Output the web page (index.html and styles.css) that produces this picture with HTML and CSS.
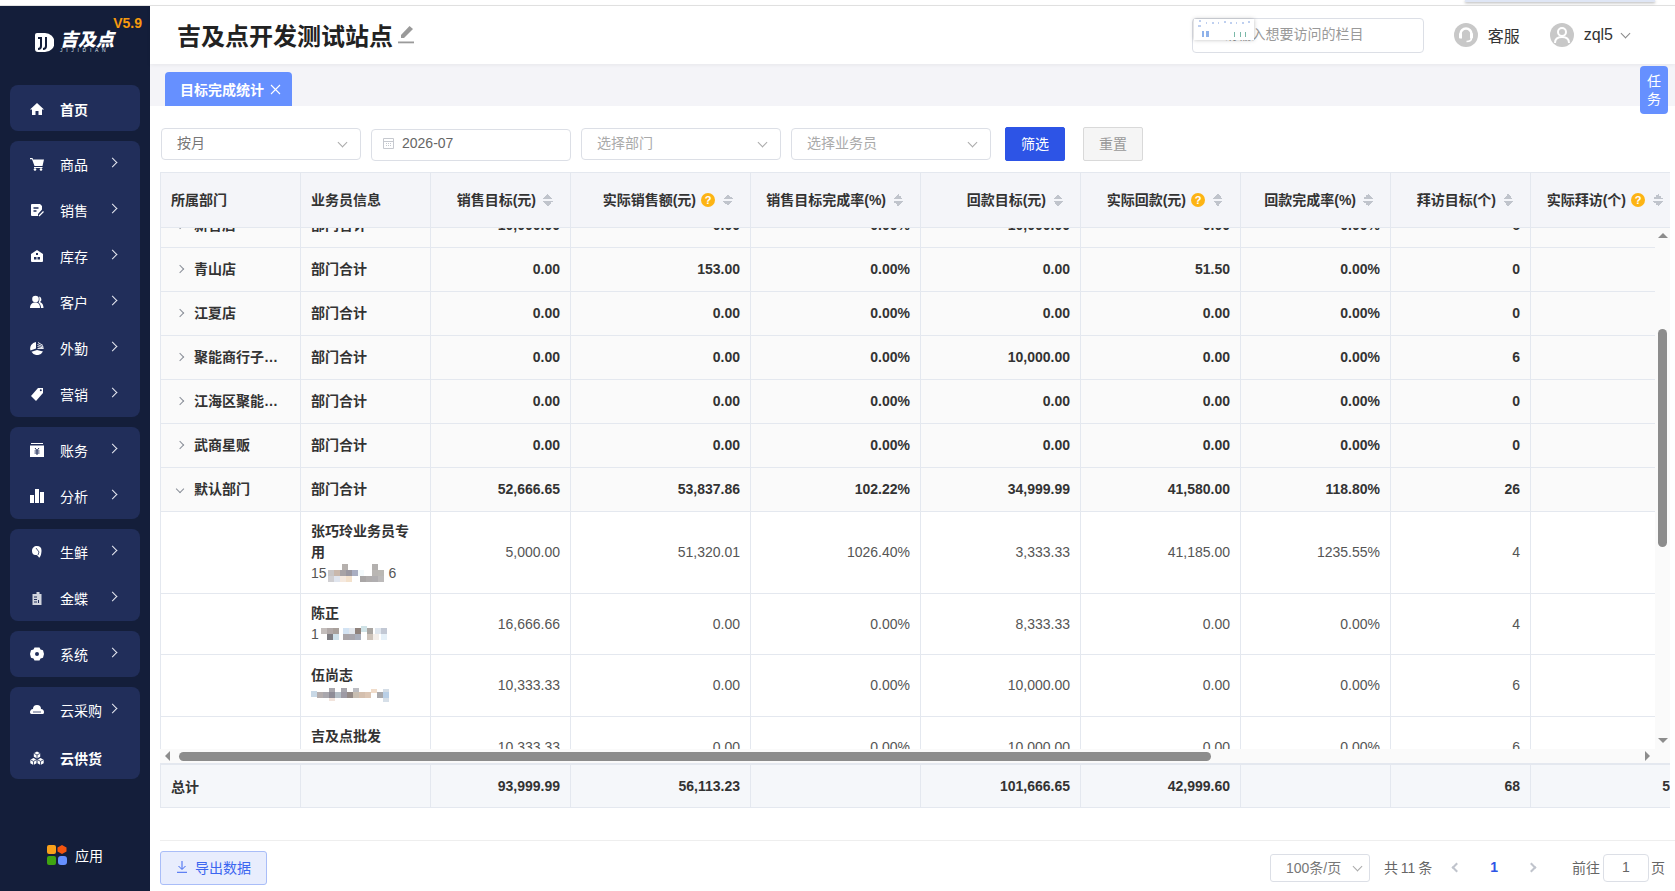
FILE: index.html
```html
<!DOCTYPE html>
<html lang="zh-CN">

<head>
    <meta charset="UTF-8" />
    <title>目标完成统计</title>
    <link rel="stylesheet" href="styles.css">
</head>

<body>
    <div class="topline">
        <div class="topline-frag"></div>
    </div>
    <div class="app">
        <aside class="sidebar">
            <div class="logo">
                <svg class="logo-mark" width="20" height="21" viewBox="0 0 20 21">
                    <path d="M3 1h8a9 9 0 0 1 0 19H4a3 3 0 0 1-3-3V3a2 2 0 0 1 2-2z" fill="#fff" />
                    <path d="M7 5v9a3 3 0 0 1-3 3M12 5v9a3 3 0 0 1-3 3" fill="none" stroke="#141e3a" stroke-width="2" />
                    <rect x="4" y="5" width="3" height="2" fill="#141e3a" />
                </svg>
                <div class="logo-text">
                    <div class="logo-cn">吉及点</div>
                    <div class="logo-en">JIJIDIAN</div>
                </div>
                <span class="version">V5.9</span>
            </div>

            <div class="nav-group">
                <a class="nav-item bold">
                    <svg class="nav-icon" viewBox="0 0 14 14"><path d="M7 1l7 6.500h-2V13H8.500V9h-3v4H2V7.500H0z" /></svg>
                    <span>首页</span>
                </a>
            </div>
            <div class="nav-group">
                <a class="nav-item">
                    <svg class="nav-icon" viewBox="0 0 14 14"><path d="M0 1h2.500l.6 1.500H14l-1.500 6.500H4.500L2 2.300H0z" /><path d="M4 10h8.500v1H4z" /><circle cx="5" cy="12.500" r="1.300" /><circle cx="11" cy="12.500" r="1.300" /></svg>
                    <span>商品</span>
                    <i class="nav-arrow"></i>
                </a>
                <a class="nav-item">
                    <svg class="nav-icon" viewBox="0 0 14 14"><path d="M2 1h8l2 2v3.500L8 11v2H2a1 1 0 0 1-1-1V2a1 1 0 0 1 1-1z" /><path d="M3.500 5h5M3.500 8h3" stroke="#212e5a" stroke-width="1.300" /><path d="M9 13l4.500-4.500" stroke="#fff" stroke-width="1.300" /></svg>
                    <span>销售</span>
                    <i class="nav-arrow"></i>
                </a>
                <a class="nav-item">
                    <svg class="nav-icon" viewBox="0 0 14 14"><path d="M2 13a1 1 0 0 1-1-1V5l6-4 6 4v7a1 1 0 0 1-1 1z" /><path d="M6 4h2v2H6zM4 8h2.500v2.500H4zM7.500 8H10v2.500H7.500z" fill="#212e5a" /></svg>
                    <span>库存</span>
                    <i class="nav-arrow"></i>
                </a>
                <a class="nav-item">
                    <svg class="nav-icon" viewBox="0 0 14 14"><circle cx="5.500" cy="4" r="3.300" /><path d="M0 13c0-3.500 2-5.500 5.500-5.500S10 10 10 13z" /><path d="M9 1.500a3 3 0 0 1 1 5.500c2.500 1 3.500 3 3.500 6h-2.500c0-2.500-1-4.500-2.500-5.500 1-1.500 1.300-4 .5-6z" /></svg>
                    <span>客户</span>
                    <i class="nav-arrow"></i>
                </a>
                <a class="nav-item">
                    <svg class="nav-icon" viewBox="0 0 14 14"><path d="M6 1v6.500l-5.500 2A6.500 6.500 0 0 1 6 1z" /><path d="M1.500 10.700L7 9l6 1.500A6.500 6.500 0 0 1 1.500 10.700z" /><path d="M8 1.500l5 3M7.500 3.500l6 2.500M7.500 5.500l6 1.500M7.500 7.500h6" stroke="#fff" stroke-width=".9" /></svg>
                    <span>外勤</span>
                    <i class="nav-arrow"></i>
                </a>
                <a class="nav-item">
                    <svg class="nav-icon" viewBox="0 0 14 14"><path d="M8 1h5v5l-7 8-5-5z" /><circle cx="10.800" cy="3.200" r="1" fill="#212e5a" /></svg>
                    <span>营销</span>
                    <i class="nav-arrow"></i>
                </a>
            </div>
            <div class="nav-group">
                <a class="nav-item">
                    <svg class="nav-icon" viewBox="0 0 14 14"><path d="M1 0h12v1H1zM0 2.500h14V14H0z" /><path d="M5 5l2 2.500L9 5M4.500 8h5M4.500 10h5M7 7.500V12" fill="none" stroke="#212e5a" stroke-width="1" /></svg>
                    <span>账务</span>
                    <i class="nav-arrow"></i>
                </a>
                <a class="nav-item">
                    <svg class="nav-icon" viewBox="0 0 14 14"><path d="M0 6h4v8H0zM5 0h4v14H5zM10 3h4v11h-4z" /></svg>
                    <span>分析</span>
                    <i class="nav-arrow"></i>
                </a>
            </div>
            <div class="nav-group">
                <a class="nav-item">
                    <svg class="nav-icon" viewBox="0 0 14 14"><path d="M2 6c0-3 2-5 5-5s4.500 1.500 4.500 4.500S10.500 12 9.500 12.500 8 9.500 6 10 2 9 2 6z" /><path d="M6 3l3 4-1 3" fill="none" stroke="#212e5a" stroke-width=".8" /></svg>
                    <span>生鲜</span>
                    <i class="nav-arrow"></i>
                </a>
                <a class="nav-item">
                    <svg class="nav-icon dim" viewBox="0 0 14 14"><path d="M2.500 3h4V1h3v2h2v11h-9z" /><path d="M4 6h3M4 8.500h3M4 11h3M8.500 9v3" stroke="#212e5a" stroke-width="1" /></svg>
                    <span>金蝶</span>
                    <i class="nav-arrow"></i>
                </a>
            </div>
            <div class="nav-group">
                <a class="nav-item">
                    <svg class="nav-icon" viewBox="0 0 14 14"><path fill-rule="evenodd" d="M4.500 .5h5l1 2 2.500.7L14 7l-1 3.800-2.500.7-1 2h-5l-1-2L1 10.800 0 7l1-3.800 2.500-.7zM7 5a2 2 0 1 0 0 4 2 2 0 0 0 0-4z" /></svg>
                    <span>系统</span>
                    <i class="nav-arrow"></i>
                </a>
            </div>
            <div class="nav-group">
                <a class="nav-item">
                    <svg class="nav-icon" viewBox="0 0 14 14"><path d="M3 6a4 4 0 0 1 8 0c2 0 3 1.500 3 3s-.5 2-1.500 2h-11C.5 11 0 10 0 9s1-3 3-3z" /><path d="M3 9h8" stroke="#212e5a" stroke-width=".8" /></svg>
                    <span>云采购</span>
                    <i class="nav-arrow"></i>
                </a>
                <a class="nav-item bold low">
                    <svg class="nav-icon" viewBox="0 0 14 14"><path d="M7 .5l3.200 1.800v3.400L7 7.500 3.800 5.700V2.300zM3.500 7l3 1.700v3.600l-3 1.700-3.200-1.700V8.700zM10.500 7l3.200 1.700v3.600L10.500 14l-3-1.700V8.700z" /><path d="M3.800 2.300L7 4l3.200-1.700M7 4v3.500M.3 8.700l3.200 1.700 3-1.700M3.500 10.400V14M7.500 8.700l3 1.700 3.200-1.700M10.500 10.400V14" fill="none" stroke="#212e5a" stroke-width=".8" /></svg>
                    <span>云供货</span>
                </a>
            </div>

            <div class="apps">
                <svg width="20" height="20" viewBox="0 0 20 20">
                    <rect width="9" height="9" rx="2" fill="#f9a11b" />
                    <path d="M15 0l4.500 2.500v4L15 9l-4.500-2.500v-4z" fill="#f4550f" />
                    <rect y="11" width="9" height="9" rx="2" fill="#3fa411" />
                    <rect x="11" y="11" width="9" height="9" rx="3" fill="#6690ff" />
                </svg>
                <span>应用</span>
            </div>
        </aside>

        <main class="main">
            <header class="header">
                <h1>吉及点开发测试站点</h1>
                <svg class="edit-icon" width="16" height="18" viewBox="0 0 16 18">
                    <path d="M11.500 0L15 3 6 12H3V9z" fill="#9a9a9a" />
                    <rect y="15.500" width="16" height="1.800" fill="#9a9a9a" />
                </svg>
                <div class="search">
                    <span>请输入想要访问的栏目</span>
                    <svg class="search-patch" width="60" height="21" viewBox="0 0 60 21">
                        <rect width="60" height="21" fill="#fff" />
                        <path d="M5 2h2M12 4h1M18 4h2M24 4h1M30 3h2M36 4h2M42 4h1M48 4h2M54 3h2M4 7h3" stroke="#7fa0e0" stroke-width="1" />
                        <path d="M8 12h2v6H8zM12 12h3v6h-3z" fill="#8fb2ea" />
                        <path d="M40 13h1v5h-1zM46 13h1v5h-1zM51 13h1v5h-1z" fill="#7ab8a8" />
                    </svg>
                </div>
                <div class="head-link">
                    <svg width="24" height="24" viewBox="0 0 24 24">
                        <circle cx="12" cy="12" r="12" fill="#c8c8c8" />
                        <path d="M6.500 14v-3a5.500 5.500 0 0 1 11 0v3" fill="none" stroke="#fff" stroke-width="2.600" />
                        <path d="M5 10.500h3v5H6a1 1 0 0 1-1-1zM16 10.500h3v4a1 1 0 0 1-1 1h-2z" fill="#fff" />
                        <path d="M17.500 15c0 2.500-2 3.500-5 3.500" fill="none" stroke="#fff" stroke-width="1.600" />
                    </svg>
                    <span>客服</span>
                </div>
                <div class="head-link user">
                    <svg width="24" height="24" viewBox="0 0 24 24">
                        <circle cx="12" cy="12" r="12" fill="#c8c8c8" />
                        <circle cx="12" cy="9" r="4" fill="none" stroke="#fff" stroke-width="2" />
                        <path d="M5 20c0-4 3-6 7-6s7 2 7 6" fill="none" stroke="#fff" stroke-width="2" />
                    </svg>
                    <span>zql5</span>
                    <i class="chev"></i>
                </div>
            </header>

            <div class="tabs">
                <div class="tab">目标完成统计
                    <svg width="11" height="11" viewBox="0 0 11 11"><path d="M1 1l9 9M10 1l-9 9" stroke="#fff" stroke-width="1.100" /></svg>
                </div>
            </div>
            <div class="task">任<br>务</div>

            <div class="content">
                <div class="filters">
                    <div class="field">按月<i class="chev"></i></div>
                    <div class="field date">
                        <svg width="11" height="12" viewBox="0 0 11 12"><path d="M.5 1.500h10v10H.5zM.5 4.500h10M3 6.500h1M5 6.500h1M7 6.500h1M3 8.500h1M5 8.500h1M7 8.500h1" fill="none" stroke="#c6c9cf" /></svg>
                        2026-07
                    </div>
                    <div class="field placeholder">选择部门<i class="chev"></i></div>
                    <div class="field placeholder">选择业务员<i class="chev"></i></div>
                    <button class="btn-primary">筛选</button>
                    <button class="btn-reset">重置</button>
                </div>

                <div class="grid">
                    <table class="tbl tbl-head">
                        <colgroup><col class="c1"><col class="c2"><col class="c3"><col class="c4"><col class="c5"><col class="c6"><col class="c7"><col class="c8"><col class="c9"><col class="c10"></colgroup>
                        <tr>
                            <th>所属部门</th>
                            <th>业务员信息</th>
                            <th class="num">销售目标(元)<i class="sort"></i></th>
                            <th class="num">实际销售额(元)<i class="help">?</i><i class="sort"></i></th>
                            <th class="num">销售目标完成率(%)<i class="sort"></i></th>
                            <th class="num">回款目标(元)<i class="sort"></i></th>
                            <th class="num">实际回款(元)<i class="help">?</i><i class="sort"></i></th>
                            <th class="num">回款完成率(%)<i class="sort"></i></th>
                            <th class="num">拜访目标(个)<i class="sort"></i></th>
                            <th class="num">实际拜访(个)<i class="help">?</i><i class="sort"></i></th>
                        </tr>
                    </table>

                    <div class="grid-mid">
                        <div class="grid-body">
                            <table class="tbl tbl-body">
                                <colgroup><col class="c1"><col class="c2"><col class="c3"><col class="c4"><col class="c5"><col class="c6"><col class="c7"><col class="c8"><col class="c9"><col class="c10"></colgroup>
                                <tr class="dept"><td><i class="tree"></i>新合店</td><td>部门合计</td><td class="num">10,000.00</td><td class="num">0.00</td><td class="num">0.00%</td><td class="num">10,000.00</td><td class="num">0.00</td><td class="num">0.00%</td><td class="num">6</td><td></td></tr>
                                <tr class="dept"><td><i class="tree"></i>青山店</td><td>部门合计</td><td class="num">0.00</td><td class="num">153.00</td><td class="num">0.00%</td><td class="num">0.00</td><td class="num">51.50</td><td class="num">0.00%</td><td class="num">0</td><td></td></tr>
                                <tr class="dept"><td><i class="tree"></i>江夏店</td><td>部门合计</td><td class="num">0.00</td><td class="num">0.00</td><td class="num">0.00%</td><td class="num">0.00</td><td class="num">0.00</td><td class="num">0.00%</td><td class="num">0</td><td></td></tr>
                                <tr class="dept"><td><i class="tree"></i>聚能商行子…</td><td>部门合计</td><td class="num">0.00</td><td class="num">0.00</td><td class="num">0.00%</td><td class="num">10,000.00</td><td class="num">0.00</td><td class="num">0.00%</td><td class="num">6</td><td></td></tr>
                                <tr class="dept"><td><i class="tree"></i>江海区聚能…</td><td>部门合计</td><td class="num">0.00</td><td class="num">0.00</td><td class="num">0.00%</td><td class="num">0.00</td><td class="num">0.00</td><td class="num">0.00%</td><td class="num">0</td><td></td></tr>
                                <tr class="dept"><td><i class="tree"></i>武商星贩</td><td>部门合计</td><td class="num">0.00</td><td class="num">0.00</td><td class="num">0.00%</td><td class="num">0.00</td><td class="num">0.00</td><td class="num">0.00%</td><td class="num">0</td><td></td></tr>
                                <tr class="dept"><td><i class="tree open"></i>默认部门</td><td>部门合计</td><td class="num">52,666.65</td><td class="num">53,837.86</td><td class="num">102.22%</td><td class="num">34,999.99</td><td class="num">41,580.00</td><td class="num">118.80%</td><td class="num">26</td><td></td></tr>
                                <tr>
                                    <td></td>
                                    <td><div class="name">张巧玲业务员专用</div>
                                        <div class="phone">15<svg class="mosaic" width="62" height="18" viewBox="0 0 60 18"><g>
                                            <rect x="14" width="6" height="6" fill="#b5b0ad" /><rect x="44" width="6" height="6" fill="#b3b0ae" />
                                            <rect y="6" width="6" height="6" fill="#c9c6c6" /><rect x="6" y="6" width="6" height="6" fill="#c9b8ac" /><rect x="12" y="6" width="6" height="6" fill="#a8a3a6" /><rect x="18" y="6" width="6" height="6" fill="#9a97a0" /><rect x="24" y="6" width="6" height="6" fill="#a9aec2" /><rect x="30" y="6" width="6" height="6" fill="#f4fafc" /><rect x="44" y="6" width="6" height="6" fill="#b9b6b3" /><rect x="50" y="6" width="6" height="6" fill="#bab8b4" />
                                            <rect y="12" width="6" height="6" fill="#d0cfd2" /><rect x="6" y="12" width="6" height="6" fill="#e0e5ee" /><rect x="12" y="12" width="6" height="6" fill="#f5e9df" /><rect x="18" y="12" width="6" height="6" fill="#f3e1cc" /><rect x="32" y="12" width="6" height="6" fill="#a9a6a6" /><rect x="38" y="12" width="6" height="6" fill="#b0adad" /><rect x="44" y="12" width="6" height="6" fill="#b0aeb0" /><rect x="50" y="12" width="6" height="6" fill="#bcbaba" />
                                        </g></svg>6</div>
                                    </td>
                                    <td class="num">5,000.00</td><td class="num">51,320.01</td><td class="num">1026.40%</td><td class="num">3,333.33</td><td class="num">41,185.00</td><td class="num">1235.55%</td><td class="num">4</td><td></td>
                                </tr>
                                <tr>
                                    <td></td>
                                    <td><div class="name">陈正</div>
                                        <div class="phone">1<svg class="mosaic" width="76" height="18" viewBox="0 0 72 18"><g>
                                            <rect y="3" width="6" height="6" fill="#c4bebc" /><rect x="6" y="3" width="6" height="6" fill="#b1a9a8" /><rect x="12" y="3" width="6" height="6" fill="#a9a19c" /><rect x="22" y="3" width="6" height="6" fill="#d3e3f3" /><rect x="28" y="3" width="6" height="6" fill="#e4e8ee" /><rect x="34" y="3" width="6" height="6" fill="#8f827c" /><rect x="40" y="1" width="6" height="6" fill="#cfe2e6" /><rect x="46" y="3" width="6" height="6" fill="#a9a5a1" /><rect x="54" y="3" width="6" height="6" fill="#dfe6ee" /><rect x="60" y="3" width="6" height="6" fill="#c2c8d4" />
                                            <rect x="6" y="9" width="6" height="6" fill="#7e7d82" /><rect x="12" y="9" width="6" height="6" fill="#cfe1ea" /><rect x="22" y="9" width="6" height="6" fill="#a9a5a9" /><rect x="28" y="9" width="6" height="6" fill="#a8a6ad" /><rect x="34" y="9" width="6" height="6" fill="#a9aebb" /><rect x="46" y="9" width="6" height="6" fill="#cdc3ba" /><rect x="52" y="9" width="6" height="6" fill="#f3eeea" /><rect x="60" y="9" width="6" height="6" fill="#e5f0f8" />
                                        </g></svg></div>
                                    </td>
                                    <td class="num">16,666.66</td><td class="num">0.00</td><td class="num">0.00%</td><td class="num">8,333.33</td><td class="num">0.00</td><td class="num">0.00%</td><td class="num">4</td><td></td>
                                </tr>
                                <tr class="row-62">
                                    <td></td>
                                    <td><div class="name">伍尚志</div>
                                        <div class="phone"><svg class="mosaic wide" width="90" height="15" viewBox="0 0 90 15"><g>
                                            <rect x="0" y="3" width="6" height="6" fill="#c8d8e6" /><rect x="18" width="6" height="4" fill="#a9a7ad" /><rect x="30" width="6" height="4" fill="#a7a6ad" /><rect x="42" width="6" height="4" fill="#bcbdc2" /><rect x="60" y="1" width="6" height="4" fill="#f0dcca" /><rect x="72" y="1" width="6" height="4" fill="#d4dde6" />
                                            <rect x="6" y="4" width="6" height="6" fill="#b4adad" /><rect x="12" y="4" width="6" height="6" fill="#a9a7ad" /><rect x="18" y="4" width="6" height="6" fill="#8e8c96" /><rect x="24" y="4" width="6" height="6" fill="#b4bec6" /><rect x="30" y="4" width="6" height="6" fill="#9d9aa4" /><rect x="36" y="4" width="6" height="6" fill="#948a86" /><rect x="42" y="4" width="6" height="6" fill="#c8beb2" /><rect x="48" y="4" width="6" height="6" fill="#d4bfae" /><rect x="54" y="4" width="6" height="6" fill="#dcc6b4" /><rect x="66" y="4" width="6" height="6" fill="#a9a9ac" /><rect x="72" y="4" width="6" height="6" fill="#b9cfe6" />
                                            <rect x="18" y="10" width="6" height="3" fill="#f2e4dc" /><rect x="72" y="10" width="6" height="4" fill="#d6dfe8" />
                                        </g></svg></div>
                                    </td>
                                    <td class="num">10,333.33</td><td class="num">0.00</td><td class="num">0.00%</td><td class="num">10,000.00</td><td class="num">0.00</td><td class="num">0.00%</td><td class="num">6</td><td></td>
                                </tr>
                                <tr>
                                    <td></td>
                                    <td><div class="name">吉及点批发</div><div class="phone">&nbsp;</div></td>
                                    <td class="num">10,333.33</td><td class="num">0.00</td><td class="num">0.00%</td><td class="num">10,000.00</td><td class="num">0.00</td><td class="num">0.00%</td><td class="num">6</td><td></td>
                                </tr>
                            </table>
                        </div>
                        <div class="vbar">
                            <i class="arr-up"></i>
                            <div class="vthumb"></div>
                            <i class="arr-down"></i>
                        </div>
                    </div>
                    <div class="hbar">
                        <i class="arr-left"></i>
                        <div class="hthumb"></div>
                        <i class="arr-right"></i>
                    </div>

                    <table class="tbl tbl-foot">
                        <colgroup><col class="c1"><col class="c2"><col class="c3"><col class="c4"><col class="c5"><col class="c6"><col class="c7"><col class="c8"><col class="c9"><col class="c10"></colgroup>
                        <tr>
                            <td>总计</td><td></td><td class="num">93,999.99</td><td class="num">56,113.23</td><td></td><td class="num">101,666.65</td><td class="num">42,999.60</td><td></td><td class="num">68</td><td class="num">5</td>
                        </tr>
                    </table>
                </div>

                <div class="bottom">
                    <button class="btn-export">
                        <svg width="12" height="12" viewBox="0 0 12 12"><path d="M6 0v8M2.500 5L6 8.500 9.500 5M1 11.300h10" fill="none" stroke="#3c66f0" stroke-width="1" /></svg>
                        导出数据
                    </button>
                    <div class="pager">
                        <div class="page-size">100条/页<i class="chev"></i></div>
                        <span class="page-total">共 11 条</span>
                        <i class="page-prev"></i>
                        <span class="page-cur">1</span>
                        <i class="page-next"></i>
                        <span class="page-go">前往</span>
                        <div class="page-input">1</div>
                        <span class="page-unit">页</span>
                    </div>
                </div>
            </div>
        </main>
    </div>
</body>

</html>
```

FILE: styles.css
```css
:root{
    --side-bg: #141e3a;
    --group-bg: #212e5a;
    --blue: #6690ff;
    --blue2: #2d54e6;
    --line: #e4e8ef;
    --input-line: #dcdfe6;
}

*{
    box-sizing: border-box;
}
body{
    margin: 0;
    height: 891px;
    overflow: hidden;
    background: #fff;
    font-family: "Liberation Sans", "Noto Sans CJK SC", sans-serif;
    font-size: 14px;
    color: #333;
}
i{
    font-style: normal;
}

.topline{
    height: 6px;
    border-bottom: 1px solid #e3e3e3;
    position: relative;
}
.topline-frag{
    position: absolute;
    left: 1465px;
    top: 0;
    width: 190px;
    height: 2px;
    background: #dfe6f5;
    box-shadow: 0 1px 3px rgba(0,0,0,.35);
}
.app{
    display: flex;
    height: 885px;
}

/* sidebar */
.sidebar{
    width: 150px;
    flex: none;
    background: var(--side-bg);
    display: flex;
    flex-direction: column;
    color: #fff;
}
.logo{
    height: 79px;
    padding: 26px 0 0 34px;
    display: flex;
    gap: 6px;
    position: relative;
}
.logo-cn{
    margin-top: 1px;
    font-size: 18px;
    line-height: 14px;
    height: 14px;
    font-weight: 900;
    font-style: italic;
    white-space: nowrap;
}
.logo-en{
    font-size: 5px;
    line-height: 7px;
    letter-spacing: 3.7px;
    color: #dfe2ea;
}
.version{
    position: absolute;
    right: 8px;
    top: 9px;
    font-size: 14px;
    font-weight: bold;
    color: #f79a0e;
}
.nav-group{
    margin: 0 10px 10px;
    background: var(--group-bg);
    border-radius: 8px;
}
.nav-item{
    height: 46px;
    padding: 0 24px 0 20px;
    display: flex;
    align-items: center;
    font-size: 14px;
    white-space: nowrap;
}
.nav-item.bold{
    padding-top: 2px;
    font-weight: bold;
}
.nav-item.low{
    padding-top: 4px;
}
.nav-icon{
    width: 14px;
    height: 14px;
    flex: none;
    margin-right: 16px;
    fill: #fff;
}
.nav-icon.dim{
    opacity: .8;
}
.nav-arrow{
    margin-left: auto;
    margin-top: -4px;
    width: 7px;
    height: 7px;
    border-top: 1px solid #e8eaf2;
    border-right: 1px solid #e8eaf2;
    transform: rotate(45deg);
}
.apps{
    margin-top: auto;
    padding: 0 0 26px 47px;
    display: flex;
    align-items: center;
    gap: 8px;
}

/* header */
.main{
    flex: 1;
    min-width: 0;
    position: relative;
}
.header{
    height: 58px;
    padding: 0 45px 0 27px;
    display: flex;
    align-items: center;
    background: #fff;
    box-shadow: 0 1px 4px rgba(0,0,0,.06);
    position: relative;
}
.header h1{
    margin: 0 0 2px;
    font-size: 24px;
    font-weight: bold;
    color: #222;
}
.edit-icon{
    margin-left: 5px;
}
.search{
    margin-left: auto;
    width: 232px;
    height: 35px;
    padding-left: 31px;
    border: 1px solid var(--input-line);
    border-radius: 4px;
    line-height: 31px;
    color: #999;
    position: relative;
}
.search-patch{
    position: absolute;
    left: 1px;
    top: 0;
    box-shadow: 0 0 4px rgba(0,0,0,.25);
}
.head-link{
    margin-left: 30px;
    display: flex;
    align-items: center;
    gap: 10px;
    font-size: 16px;
}
.head-link.user{
    margin-left: 30px;
}
.chev{
    width: 7px;
    height: 7px;
    border-right: 1px solid #aaa;
    border-bottom: 1px solid #aaa;
    transform: rotate(45deg);
    display: inline-block;
}
.user .chev{
    margin: -4px 1px 0 -1px;
    border-color: #888;
}

/* tabs */
.tabs{
    height: 42px;
    padding: 8px 0 0 15px;
    background: #f4f4f8;
}
.tab{
    width: 127px;
    height: 34px;
    padding-left: 15px;
    display: flex;
    align-items: center;
    gap: 6px;
    background: var(--blue);
    color: #fff;
    font-weight: bold;
    border-radius: 4px 4px 0 0;
}
.task{
    position: absolute;
    top: 60px;
    right: 7px;
    width: 28px;
    height: 48px;
    padding-top: 6px;
    background: var(--blue);
    color: #fff;
    border-radius: 4px;
    text-align: center;
    font-size: 14px;
    line-height: 18px;
}

/* filters */
.content{
    padding: 21px 0 0 11px;
}
.filters{
    display: flex;
    align-items: flex-start;
    gap: 10px;
    height: 34px;
    margin-bottom: 11px;
}
.field{
    width: 200px;
    height: 32px;
    margin-top: 1px;
    padding: 0 15px 4px;
    display: flex;
    align-items: center;
    justify-content: space-between;
    border: 1px solid var(--input-line);
    border-radius: 4px;
    color: #777;
}
.field .chev{
    margin-top: 0;
    margin-right: -1px;
}
.field.placeholder{
    color: #aaa;
}
.field.date{
    margin-top: 2px;
    padding-left: 11px;
    justify-content: flex-start;
    gap: 8px;
    color: #666;
}
.filters button{
    width: 60px;
    height: 34px;
    padding: 0 0 2px;
    font: inherit;
    border-radius: 2px;
}
.btn-primary{
    margin-left: 4px;
    background: var(--blue2);
    border: 1px solid var(--blue2);
    color: #fff;
}
.btn-reset{
    margin-left: 8px;
    background: #f5f5f5;
    border: 1px solid #d9d9d9;
    color: #999;
}

/* table */
.grid{
    width: 1510px;
    margin-left: -1px;
    overflow: hidden;
}
.tbl{
    table-layout: fixed;
    width: 1521px;
    border-collapse: separate;
    border-spacing: 0;
}
.c1{ width: 141px; }
.c2{ width: 130px; }
.c3{ width: 140px; }
.c4{ width: 180px; }
.c5{ width: 170px; }
.c6{ width: 160px; }
.c7{ width: 160px; }
.c8{ width: 150px; }
.c9{ width: 140px; }
.c10{ width: 150px; }
.tbl th,
.tbl td{
    padding: 0 10px;
    border-right: 1px solid var(--line);
    border-bottom: 1px solid var(--line);
    white-space: nowrap;
    text-align: left;
}
.tbl th:first-child,
.tbl td:first-child{
    border-left: 1px solid var(--line);
}
.tbl .num{
    text-align: right;
}
.tbl-head th{
    height: 56px;
    padding-bottom: 2px;
    border-top: 1px solid var(--line);
    background: #f4f5f9;
    font-weight: 600;
    color: #333;
}
.help{
    display: inline-block;
    width: 14px;
    height: 14px;
    margin-left: 5px;
    border-radius: 50%;
    background: #fdb414;
    color: #fff;
    font-size: 11px;
    line-height: 14px;
    text-align: center;
    font-weight: bold;
    vertical-align: 1px;
}
.sort{
    display: inline-block;
    width: 10px;
    height: 12px;
    margin-left: 7px;
    margin-right: 7px;
    vertical-align: -1px;
    background:
        linear-gradient(to top left, #c0c4cc 50%, transparent 50%) 0 0 / 5px 5px no-repeat,
        linear-gradient(to top right, #c0c4cc 50%, transparent 50%) 5px 0 / 5px 5px no-repeat,
        linear-gradient(to bottom left, #c0c4cc 50%, transparent 50%) 0 7px / 5px 5px no-repeat,
        linear-gradient(to bottom right, #c0c4cc 50%, transparent 50%) 5px 7px / 5px 5px no-repeat;
}
.help + .sort{
    margin-left: 8px;
}
.grid-mid{
    display: flex;
    height: 521px;
}
.grid-body{
    width: 1495px;
    height: 521px;
    overflow: hidden;
}
.tbl-body{
    margin-top: -24px;
    color: #555;
}
.tbl-body td{
    height: 44px;
    padding-top: 9px;
    padding-bottom: 9px;
    line-height: 21px;
}
.tbl-body td:nth-child(2){
    white-space: normal;
}
.tbl-body .dept td{
    background: #fafafa;
    font-weight: bold;
    color: #333;
}
.tbl-body .row-62 td{
    height: 62px;
}
.name{
    font-weight: 600;
    color: #333;
}
.phone{
    height: 21px;
    line-height: 21px;
    white-space: nowrap;
}
.mosaic{
    vertical-align: -4px;
    shape-rendering: crispEdges;
}
.mosaic.wide{
    vertical-align: -2px;
}
.tree{
    display: inline-block;
    width: 6px;
    height: 6px;
    margin: 0 11px 2px 6px;
    border-top: 1px solid #8a8f99;
    border-right: 1px solid #8a8f99;
    transform: rotate(45deg);
}
.tree.open{
    transform: rotate(135deg);
}
.vbar{
    width: 15px;
    height: 521px;
    background: #fafafa;
    display: flex;
    flex-direction: column;
    align-items: center;
    padding: 5px 0 6px;
}
.arr-up,
.arr-down{
    width: 0;
    height: 0;
    border-left: 5px solid transparent;
    border-right: 5px solid transparent;
}
.arr-up{
    border-bottom: 5px solid #8c8c8c;
}
.arr-down{
    margin-top: auto;
    border-top: 5px solid #8c8c8c;
}
.vthumb{
    width: 9px;
    height: 218px;
    margin-top: 91px;
    border-radius: 5px;
    background: #8c8c8c;
}
.hbar{
    height: 16px;
    background: #fafafa;
    display: flex;
    align-items: center;
    border-bottom: 2px solid var(--line);
    padding-left: 5px;
}
.arr-left,
.arr-right{
    width: 0;
    height: 0;
    border-top: 5px solid transparent;
    border-bottom: 5px solid transparent;
}
.arr-left{
    border-right: 5px solid #8c8c8c;
}
.arr-right{
    margin-left: 434px;
    border-left: 5px solid #8c8c8c;
}
.hthumb{
    width: 1032px;
    height: 9px;
    margin-left: 9px;
    border-radius: 5px;
    background: #8c8c8c;
}
.tbl-foot td{
    height: 43px;
    background: #f5f7fa;
    font-weight: bold;
    color: #333;
}

/* bottom bar */
.bottom{
    margin: 32px 0 0 -1px;
    padding-top: 10px;
    border-top: 1px solid #eee;
    display: flex;
    justify-content: space-between;
}
.btn-export{
    width: 107px;
    height: 34px;
    padding: 0 0 2px;
    display: flex;
    align-items: center;
    justify-content: center;
    gap: 7px;
    font: inherit;
    background: #e8edfd;
    border: 1px solid #a9bdf8;
    border-radius: 3px;
    color: #3c66f0;
}
.pager{
    display: flex;
    align-items: center;
    height: 28px;
    margin-top: 3px;
    padding: 0 10px 2px 0;
    color: #666;
}
.page-size{
    width: 100px;
    height: 28px;
    margin-top: 2px;
    padding: 0 8px 2px 15px;
    display: flex;
    align-items: center;
    justify-content: space-between;
    border: 1px solid var(--input-line);
    border-radius: 3px;
    color: #777;
}
.page-size .chev{
    margin-top: -2px;
}
.page-total{
    margin-left: 14px;
    word-spacing: -1px;
}
.page-prev,
.page-next{
    width: 7px;
    height: 7px;
    border-top: 2px solid #c0c4cc;
    border-right: 2px solid #c0c4cc;
}
.page-prev{
    margin-left: 21px;
    transform: rotate(-135deg);
}
.page-next{
    margin-left: 30px;
    transform: rotate(45deg);
}
.page-cur{
    margin-left: 30px;
    color: var(--blue2);
    font-weight: bold;
}
.page-go{
    margin-left: 37px;
}
.page-input{
    width: 46px;
    height: 28px;
    margin: 2px 0 0 3px;
    padding-bottom: 2px;
    border: 1px solid var(--input-line);
    border-radius: 4px;
    text-align: center;
    line-height: 24px;
}
.page-unit{
    margin-left: 2px;
}
```
